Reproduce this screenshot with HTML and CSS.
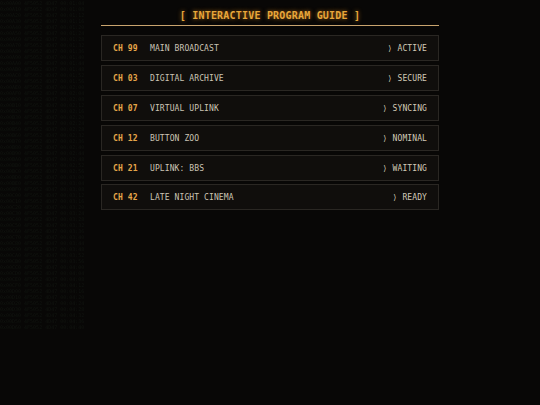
FILE: index.html
```html
<!DOCTYPE html>
<html>
<head>
<meta charset="utf-8">
<link rel="stylesheet" href="styles.css">
</head>
<body>
<pre class="backdrop">0x00A00 4F5052 4D47 00:01:04
0x00A10 4F5052 4D47 00:01:08
0x00A20 4F5052 4D47 00:01:12
0x00A30 4F5052 4D47 00:01:16
0x00A40 4F5052 4D47 00:01:20
0x00A50 4F5052 4D47 00:01:24
0x00A60 4F5052 4D47 00:01:28
0x00A70 4F5052 4D47 00:01:32
0x00A80 4F5052 4D47 00:01:36
0x00A90 4F5052 4D47 00:01:40
0x00AA0 4F5052 4D47 00:01:44
0x00AB0 4F5052 4D47 00:01:48
0x00AC0 4F5052 4D47 00:01:52
0x00AD0 4F5052 4D47 00:01:56
0x00AE0 4F5052 4D47 00:02:00
0x00AF0 4F5052 4D47 00:02:04
0x00B00 4F5052 4D47 00:02:08
0x00B10 4F5052 4D47 00:02:12
0x00B20 4F5052 4D47 00:02:16
0x00B30 4F5052 4D47 00:02:20
0x00B40 4F5052 4D47 00:02:24
0x00B50 4F5052 4D47 00:02:28
0x00B60 4F5052 4D47 00:02:32
0x00B70 4F5052 4D47 00:02:36
0x00B80 4F5052 4D47 00:02:40
0x00B90 4F5052 4D47 00:02:44
0x00BA0 4F5052 4D47 00:02:48
0x00BB0 4F5052 4D47 00:02:52
0x00BC0 4F5052 4D47 00:02:56
0x00BD0 4F5052 4D47 00:03:00
0x00BE0 4F5052 4D47 00:03:04
0x00BF0 4F5052 4D47 00:03:08
0x00C00 4F5052 4D47 00:03:12
0x00C10 4F5052 4D47 00:03:16
0x00C20 4F5052 4D47 00:03:20
0x00C30 4F5052 4D47 00:03:24
0x00C40 4F5052 4D47 00:03:28
0x00C50 4F5052 4D47 00:03:32
0x00C60 4F5052 4D47 00:03:36
0x00C70 4F5052 4D47 00:03:40
0x00C80 4F5052 4D47 00:03:44
0x00C90 4F5052 4D47 00:03:48
0x00CA0 4F5052 4D47 00:03:52
0x00CB0 4F5052 4D47 00:03:56
0x00CC0 4F5052 4D47 00:04:00
0x00CD0 4F5052 4D47 00:04:04
0x00CE0 4F5052 4D47 00:04:08
0x00CF0 4F5052 4D47 00:04:12
0x00D00 4F5052 4D47 00:04:16
0x00D10 4F5052 4D47 00:04:20
0x00D20 4F5052 4D47 00:04:24
0x00D30 4F5052 4D47 00:04:28
0x00D40 4F5052 4D47 00:04:32
0x00D50 4F5052 4D47 00:04:36
0x00D60 4F5052 4D47 00:04:40</pre>
<main class="guide">
  <header class="guide-header">[ INTERACTIVE PROGRAM GUIDE ]</header>
  <ul class="channels">
    <li class="channel"><span class="ch">CH 99</span><span class="name">MAIN BROADCAST</span><span class="status"><span class="arrow">⟩</span>ACTIVE</span></li>
    <li class="channel"><span class="ch">CH 03</span><span class="name">DIGITAL ARCHIVE</span><span class="status"><span class="arrow">⟩</span>SECURE</span></li>
    <li class="channel"><span class="ch">CH 07</span><span class="name">VIRTUAL UPLINK</span><span class="status"><span class="arrow">⟩</span>SYNCING</span></li>
    <li class="channel"><span class="ch">CH 12</span><span class="name">BUTTON ZOO</span><span class="status"><span class="arrow">⟩</span>NOMINAL</span></li>
    <li class="channel"><span class="ch">CH 21</span><span class="name">UPLINK: BBS</span><span class="status"><span class="arrow">⟩</span>WAITING</span></li>
    <li class="channel"><span class="ch">CH 42</span><span class="name">LATE NIGHT CINEMA</span><span class="status"><span class="arrow">⟩</span>READY</span></li>
  </ul>
</main>
</body>
</html>
```
FILE: styles.css
```css
html, body {
  margin: 0;
  padding: 0;
  background: #080706;
  width: 540px;
  height: 405px;
  overflow: hidden;
}
body {
  font-family: "DejaVu Sans Mono", "Liberation Mono", monospace;
  color: #cfc7b6;
}
.backdrop {
  position: fixed;
  left: 0;
  top: 0;
  margin: 0;
  font-family: "DejaVu Sans Mono", monospace;
  font-size: 5px;
  line-height: 6px;
  color: #111510;
  z-index: 0;
}
.guide {
  position: relative;
  z-index: 1;
  width: 338px;
  margin: 0 auto;
}
.guide-header {
  height: 26px;
  box-sizing: border-box;
  padding-top: 10px;
  line-height: 11px;
  border-bottom: 1px solid #c9a46e;
  text-align: center;
  font-size: 10px;
  font-weight: bold;
  letter-spacing: 0.2px;
  color: #e8a73a;
  text-shadow: 0 0 4px rgba(232, 150, 40, 0.7);
}
.channels {
  list-style: none;
  margin: 9px 0 0;
  padding: 0;
  display: flex;
  flex-direction: column;
  gap: 3.9px;
}
.channel {
  height: 26px;
  box-sizing: border-box;
  display: flex;
  align-items: center;
  padding: 1px 11px 0;
  background: #100e0c;
  border: 1px solid #2a2723;
  font-size: 8px;
  letter-spacing: 0.1px;
}
.ch {
  width: 37px;
  flex: none;
  color: #e6a64a;
  font-weight: bold;
}
.name {
  flex: 1;
  color: #cbc4b4;
}
.status {
  color: #d2cab8;
  display: flex;
  align-items: center;
}
.arrow {
  font-family: "DejaVu Sans", sans-serif;
  font-size: 8px;
  margin-right: 6px;
}
```
